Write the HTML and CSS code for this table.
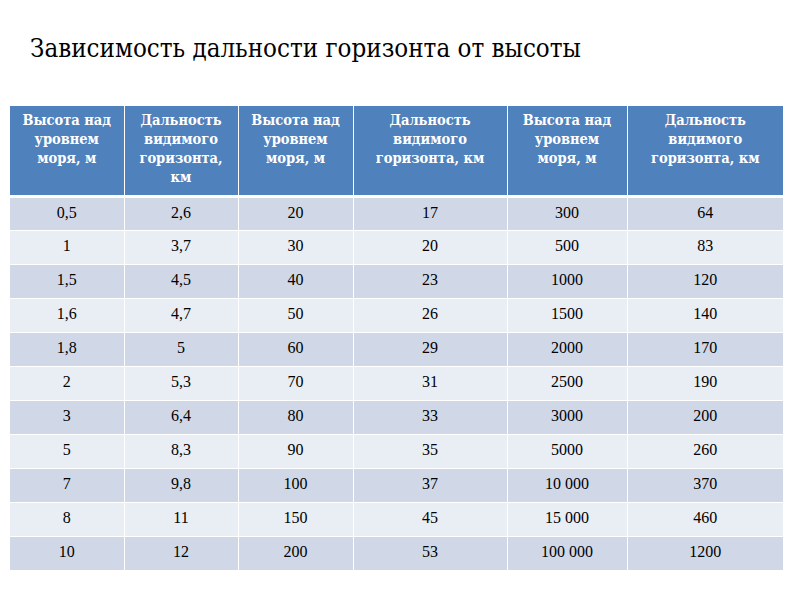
FILE: index.html
```html
<!DOCTYPE html>
<html lang="ru">
<head>
<meta charset="utf-8">
<title>Зависимость дальности горизонта от высоты</title>
<link rel="stylesheet" href="styles.css">
</head>
<body>
<div class="slide">
  <h1 class="title">Зависимость дальности горизонта от высоты</h1>
  <table class="grid">
    <colgroup>
      <col class="c1"><col class="c2"><col class="c3"><col class="c4"><col class="c5"><col class="c6">
    </colgroup>
    <thead>
      <tr>
        <th>Высота над уровнем моря, м</th>
        <th>Дальность видимого горизонта, км</th>
        <th>Высота над уровнем моря, м</th>
        <th>Дальность видимого горизонта, км</th>
        <th>Высота над уровнем моря, м</th>
        <th>Дальность видимого горизонта, км</th>
      </tr>
    </thead>
    <tbody>
      <tr><td>0,5</td><td>2,6</td><td>20</td><td>17</td><td>300</td><td>64</td></tr>
      <tr><td>1</td><td>3,7</td><td>30</td><td>20</td><td>500</td><td>83</td></tr>
      <tr><td>1,5</td><td>4,5</td><td>40</td><td>23</td><td>1000</td><td>120</td></tr>
      <tr><td>1,6</td><td>4,7</td><td>50</td><td>26</td><td>1500</td><td>140</td></tr>
      <tr><td>1,8</td><td>5</td><td>60</td><td>29</td><td>2000</td><td>170</td></tr>
      <tr><td>2</td><td>5,3</td><td>70</td><td>31</td><td>2500</td><td>190</td></tr>
      <tr><td>3</td><td>6,4</td><td>80</td><td>33</td><td>3000</td><td>200</td></tr>
      <tr><td>5</td><td>8,3</td><td>90</td><td>35</td><td>5000</td><td>260</td></tr>
      <tr><td>7</td><td>9,8</td><td>100</td><td>37</td><td>10 000</td><td>370</td></tr>
      <tr><td>8</td><td>11</td><td>150</td><td>45</td><td>15 000</td><td>460</td></tr>
      <tr><td>10</td><td>12</td><td>200</td><td>53</td><td>100 000</td><td>1200</td></tr>
    </tbody>
  </table>
</div>
</body>
</html>
```
FILE: styles.css
```css
html, body {
  margin: 0;
  padding: 0;
  background: #ffffff;
}
.slide {
  width: 800px;
  height: 600px;
  padding: 30px 0 0 10px;
  box-sizing: border-box;
  font-family: "Liberation Serif", "DejaVu Serif Condensed", "DejaVu Serif", serif;
}
.title {
  margin: 0 0 0 20px;
  height: 76px;
  font-family: "DejaVu Serif Condensed", "DejaVu Serif", serif;
  font-weight: normal;
  font-size: 25.7px;
  line-height: 36px;
  color: #000000;
}
.grid {
  width: 773px;
  border-collapse: collapse;
  table-layout: fixed;
}
.c1 { width: 114px; }
.c2 { width: 114px; }
.c3 { width: 115px; }
.c4 { width: 154px; }
.c5 { width: 120px; }
.c6 { width: 156px; }
.grid th {
  background: #4f81bd;
  color: #ffffff;
  font-family: "DejaVu Serif Condensed", "DejaVu Serif", serif;
  font-weight: bold;
  font-size: 14.5px;
  line-height: 19px;
  height: 90px;
  padding: 4px 6px 0;
  box-sizing: border-box;
  vertical-align: top;
  text-align: center;
  border-left: 1px solid #ffffff;
  border-right: 1px solid #ffffff;
  border-bottom: 3px solid #ffffff;
}
.grid td {
  font-size: 16px;
  height: 34px;
  padding: 6px 4px 0;
  box-sizing: border-box;
  vertical-align: top;
  text-align: center;
  color: #000000;
  border: 1px solid #ffffff;
  line-height: 18px;
}
.grid tbody tr:nth-child(odd) td { background: #d0d8e8; }
.grid tbody tr:nth-child(even) td { background: #e9edf4; }
.grid tr > :first-child { border-left: none; }
.grid tr > :last-child { border-right: none; }
.grid tbody tr:last-child td { border-bottom: none; }
```
